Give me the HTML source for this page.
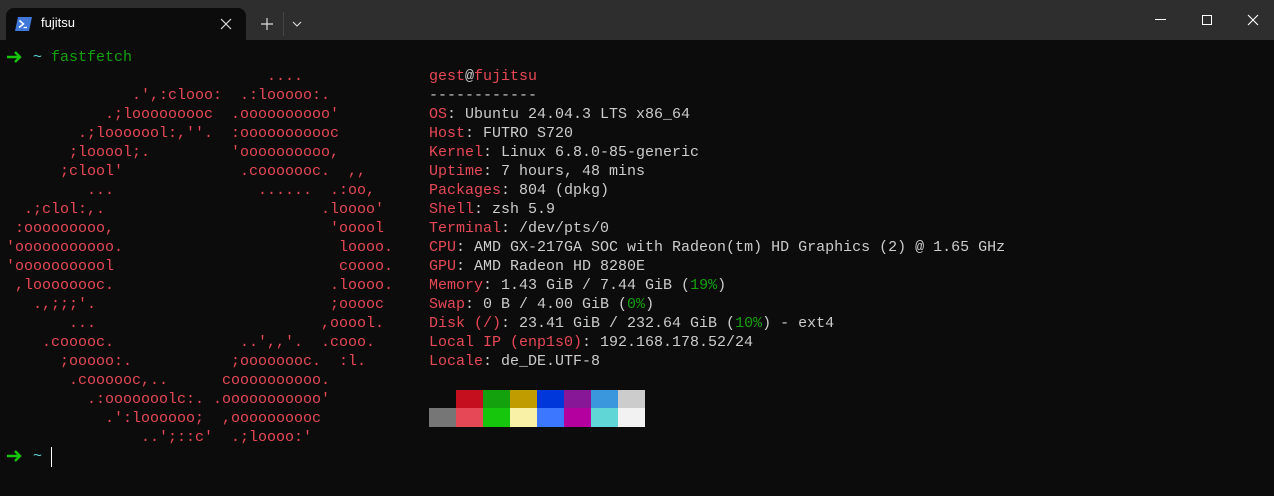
<!DOCTYPE html>
<html><head><meta charset="utf-8"><style>
html,body{margin:0;padding:0;width:1274px;height:496px;overflow:hidden;background:#0c0c0c;}
#bar{position:absolute;left:0;top:0;width:1274px;height:40px;background:#2e2e2e;}
#tab{position:absolute;left:6px;top:8px;width:240px;height:32px;background:#0c0c0c;border-radius:8px 8px 0 0;}
#tab .t{position:absolute;left:35px;top:7px;font:13px "Liberation Sans",sans-serif;color:#fff;}
pre{margin:0;font-family:"Liberation Mono","DejaVu Sans Mono",monospace;font-size:15px;line-height:19px;color:#cccccc;}
#logo{position:absolute;left:6px;top:67px;color:#e74856;}
#info{position:absolute;left:429px;top:67px;}
.r{color:#e74856}.g{color:#13a10e}.G{color:#16c60c}.c{color:#61d6d6}
.sw{position:absolute;width:27px;height:19px;}
</style></head><body>
<div id="bar">
 <div id="tab">
  <svg style="position:absolute;left:9px;top:9px" width="17" height="14" viewBox="0 0 17 14"><path d="M3 0H17L14 14H0Z" fill="#3f78d8"/><path d="M4.5 3.5L8.5 7L4 10.5" stroke="#fff" stroke-width="1.5" fill="none"/><path d="M8.5 10.5H12" stroke="#fff" stroke-width="1.3"/></svg>
  <div class="t">fujitsu</div>
  <svg style="position:absolute;left:214px;top:10px" width="12" height="12"><path d="M1 1L11 11M11 1L1 11" stroke="#ddd" stroke-width="1.2"/></svg>
 </div>
 <svg style="position:absolute;left:261px;top:18px" width="12" height="12"><path d="M6 0V12M0 6H12" stroke="#ddd" stroke-width="1.2"/></svg>
 <div style="position:absolute;left:283px;top:12px;width:1px;height:24px;background:#444"></div>
 <svg style="position:absolute;left:292px;top:21px" width="10" height="6"><path d="M1 1L5 5L9 1" stroke="#ddd" stroke-width="1.1" fill="none"/></svg>
 <div style="position:absolute;left:1155px;top:19px;width:11px;height:1px;background:#fff"></div>
 <div style="position:absolute;left:1202px;top:15px;width:8px;height:8px;border:1px solid #fff"></div>
 <svg style="position:absolute;left:1247px;top:14px" width="12" height="12"><path d="M1 1L11 11M11 1L1 11" stroke="#fff" stroke-width="1.1"/></svg>
</div>
<svg style="position:absolute;left:7px;top:51px" width="15" height="12"><path d="M0 6H13M8 1L13 6L8 11" stroke="#16c60c" stroke-width="2.4" fill="none"/></svg>
<pre style="position:absolute;left:6px;top:48px">   <span class="c">~</span> <span class="g">fastfetch</span></pre>
<pre id="logo">                             ....
              .',:clooo:  .:looooo:.
           .;looooooooc  .oooooooooo'
        .;looooool:,''.  :ooooooooooc
       ;looool;.         'oooooooooo,
      ;clool'             .cooooooc.  ,,
         ...                ......  .:oo,
  .;clol:,.                        .loooo'
 :ooooooooo,                        'ooool
'ooooooooooo.                        loooo.
'ooooooooool                         coooo.
 ,loooooooc.                        .loooo.
   .,;;;'.                          ;ooooc
       ...                         ,ooool.
    .cooooc.              ..',,'.  .cooo.
      ;ooooo:.           ;oooooooc.  :l.
       .coooooc,..      coooooooooo.
         .:ooooooolc:. .ooooooooooo'
           .':loooooo;  ,oooooooooc
               ..';::c'  .;loooo:'</pre>
<pre id="info"><span class="r">gest</span>@<span class="r">fujitsu</span>
------------
<span class="r">OS</span>: Ubuntu 24.04.3 LTS x86_64
<span class="r">Host</span>: FUTRO S720
<span class="r">Kernel</span>: Linux 6.8.0-85-generic
<span class="r">Uptime</span>: 7 hours, 48 mins
<span class="r">Packages</span>: 804 (dpkg)
<span class="r">Shell</span>: zsh 5.9
<span class="r">Terminal</span>: /dev/pts/0
<span class="r">CPU</span>: AMD GX-217GA SOC with Radeon(tm) HD Graphics (2) @ 1.65 GHz
<span class="r">GPU</span>: AMD Radeon HD 8280E
<span class="r">Memory</span>: 1.43 GiB / 7.44 GiB (<span class="g">19%</span>)
<span class="r">Swap</span>: 0 B / 4.00 GiB (<span class="g">0%</span>)
<span class="r">Disk (/)</span>: 23.41 GiB / 232.64 GiB (<span class="g">10%</span>) - ext4
<span class="r">Local IP (enp1s0)</span>: 192.168.178.52/24
<span class="r">Locale</span>: de_DE.UTF-8</pre>
<div class="sw" style="left:456px;top:390px;background:#c50f1f"></div>
<div class="sw" style="left:483px;top:390px;background:#13a10e"></div>
<div class="sw" style="left:510px;top:390px;background:#c19c00"></div>
<div class="sw" style="left:537px;top:390px;background:#0037da"></div>
<div class="sw" style="left:564px;top:390px;background:#881798"></div>
<div class="sw" style="left:591px;top:390px;background:#3a96dd"></div>
<div class="sw" style="left:618px;top:390px;background:#cccccc"></div>
<div class="sw" style="left:429px;top:408px;background:#767676"></div>
<div class="sw" style="left:456px;top:408px;background:#e74856"></div>
<div class="sw" style="left:483px;top:408px;background:#16c60c"></div>
<div class="sw" style="left:510px;top:408px;background:#f9f1a5"></div>
<div class="sw" style="left:537px;top:408px;background:#3b78ff"></div>
<div class="sw" style="left:564px;top:408px;background:#b4009e"></div>
<div class="sw" style="left:591px;top:408px;background:#61d6d6"></div>
<div class="sw" style="left:618px;top:408px;background:#f2f2f2"></div>
<svg style="position:absolute;left:7px;top:450px" width="15" height="12"><path d="M0 6H13M8 1L13 6L8 11" stroke="#16c60c" stroke-width="2.4" fill="none"/></svg>
<pre style="position:absolute;left:6px;top:447px">   <span class="c">~</span></pre>
<div style="position:absolute;left:51px;top:447px;width:1px;height:20px;background:#fff"></div>
</body></html>
